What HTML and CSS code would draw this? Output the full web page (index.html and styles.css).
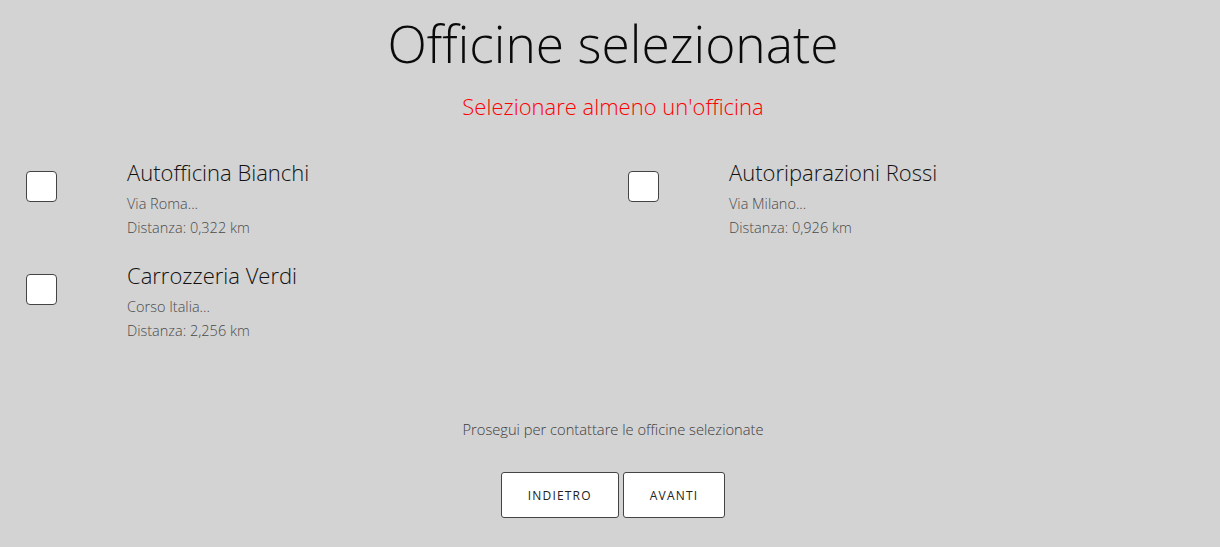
FILE: index.html
```html
<!DOCTYPE html>
<html lang="it">
<head>
  <meta charset="UTF-8">
  <title>Officine selezionate</title>
  <link rel="stylesheet" href="styles.css">
</head>
<body>

  <h1 class="title">Officine selezionate</h1>
  <p class="error">Selezionare almeno un'officina</p>

  <div class="list">
    <label class="shop">
      <span class="check"><input type="checkbox"></span>
      <span class="info">
        <span class="name">Autofficina Bianchi</span>
        <span class="detail">Via Roma...</span>
        <span class="detail">Distanza: 0,322 km</span>
      </span>
    </label>
    <label class="shop">
      <span class="check"><input type="checkbox"></span>
      <span class="info">
        <span class="name">Autoriparazioni Rossi</span>
        <span class="detail">Via Milano...</span>
        <span class="detail">Distanza: 0,926 km</span>
      </span>
    </label>
    <label class="shop">
      <span class="check"><input type="checkbox"></span>
      <span class="info">
        <span class="name">Carrozzeria Verdi</span>
        <span class="detail">Corso Italia...</span>
        <span class="detail">Distanza: 2,256 km</span>
      </span>
    </label>
  </div>

  <p class="hint">Prosegui per contattare le officine selezionate</p>

  <div class="actions">
    <button class="btn">Indietro</button>
    <button class="btn">Avanti</button>
  </div>

</body>
</html>
```

FILE: styles.css
```css
body {
  margin: 0;
  padding: 0 5px 0 11px;
  font-family: "Open Sans", sans-serif;
  font-weight: 300;
  background-color: #d3d3d3;
  color: #111;
}
.title {
  margin: 12px 0 0;
  text-align: center;
  font-size: 51.5px;
  font-weight: 300;
  line-height: 62px;
  color: #0a0a0a;
}
.error {
  margin: 17px 0 0;
  text-align: center;
  color: #ff0000;
  font-size: 22px;
  line-height: 30px;
}
.list {
  display: grid;
  grid-template-columns: 1fr 1fr;
  row-gap: 20px;
  margin-top: 36px;
}
.shop {
  display: flex;
  align-items: flex-start;
}
.check {
  width: 116px;
  padding: 14px 0 0 15px;
  box-sizing: border-box;
  flex-shrink: 0;
}
.check input {
  appearance: none;
  display: block;
  margin: 0;
  width: 31px;
  height: 31px;
  background-color: #fff;
  border: 1px solid #444;
  border-radius: 4px;
  cursor: pointer;
}
.info {
  display: flex;
  flex-direction: column;
}
.name {
  font-size: 22px;
  line-height: 30px;
  margin-bottom: 5px;
  color: #111;
}
.detail {
  font-size: 14.5px;
  line-height: 24px;
  color: #4a4a4a;
}
.hint {
  margin: 76px 0 0;
  text-align: center;
  font-size: 14.7px;
  line-height: 20px;
  color: #3c3c3c;
}
.actions {
  display: flex;
  justify-content: center;
  gap: 4px;
  margin-top: 33px;
}
.btn {
  background-color: #fff;
  color: #222;
  font-family: "Open Sans", sans-serif;
  font-size: 12px;
  font-weight: 400;
  letter-spacing: 1.2px;
  text-transform: uppercase;
  height: 46px;
  padding: 0 26px;
  border: 1px solid #444;
  border-radius: 3px;
  cursor: pointer;
}
```
